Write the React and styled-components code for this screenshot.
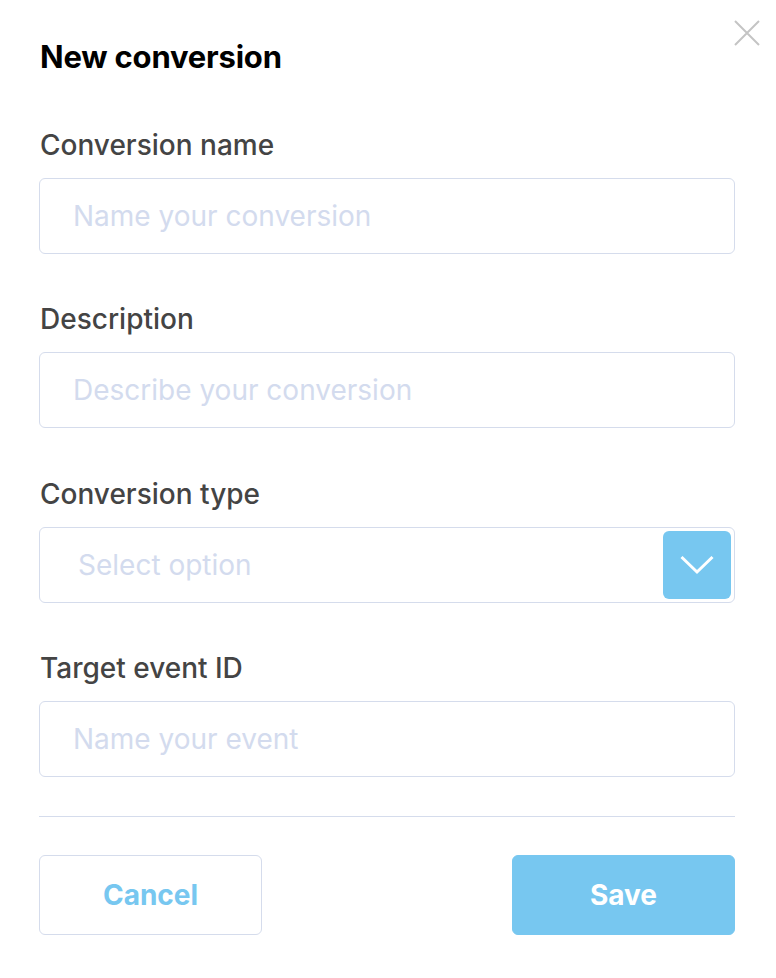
import React from "react";
import styled, { createGlobalStyle } from "styled-components";

const GlobalStyle = createGlobalStyle`
  body {
    margin: 0;
    background: #ffffff;
    font-family: Inter, "Noto Sans", sans-serif;
  }
`;

const Modal = styled.div`
  position: relative;
  width: 696px;
  padding: 39px 41px 40px 39px;
  background: #ffffff;
`;

const CloseButton = styled.button`
  position: absolute;
  top: 20px;
  right: 16px;
  width: 26px;
  height: 26px;
  padding: 0;
  border: none;
  background: transparent;
  cursor: pointer;
`;

const Title = styled.h1`
  margin: 0 0 54px 1px;
  font-size: 31px;
  line-height: 36px;
  font-weight: 700;
  letter-spacing: -0.2px;
  color: #000000;
`;

const Field = styled.div`
  display: flex;
  flex-direction: column;
  gap: 17px;
  margin-bottom: 49.4px;
`;

const Label = styled.label`
  margin-left: 1px;
  font-size: 28px;
  line-height: 32px;
  font-weight: 500;
  color: #444444;
`;

const Input = styled.input`
  box-sizing: border-box;
  width: 100%;
  height: 76px;
  padding: 0 33px;
  border: 1px solid #d5dcec;
  border-radius: 6px;
  font-family: inherit;
  font-size: 28px;
  color: #333333;
  outline: none;
  &::placeholder {
    color: #d3dbee;
  }
`;

const SelectBox = styled.div`
  box-sizing: border-box;
  display: flex;
  align-items: center;
  justify-content: space-between;
  height: 76px;
  padding: 3px 3px 3px 38px;
  border: 1px solid #d5dcec;
  border-radius: 6px;
  cursor: pointer;
`;

const SelectText = styled.span`
  font-size: 28px;
  color: #d3dbee;
`;

const ChevronBox = styled.div`
  display: flex;
  align-items: center;
  justify-content: center;
  width: 68px;
  height: 68px;
  border-radius: 6px;
  background: #77c7f0;
`;

const Divider = styled.hr`
  margin: -11px 0 38px;
  border: none;
  border-top: 1px solid #d5dcec;
`;

const Actions = styled.div`
  display: flex;
  justify-content: space-between;
`;

const Button = styled.button`
  box-sizing: border-box;
  width: 223px;
  height: 80px;
  border-radius: 6px;
  border: 1px solid ${({ $primary }) => ($primary ? "#77c7f0" : "#d5dcec")};
  background: ${({ $primary }) => ($primary ? "#77c7f0" : "#ffffff")};
  color: ${({ $primary }) => ($primary ? "#ffffff" : "#77c7f0")};
  font-family: inherit;
  font-size: 28px;
  font-weight: 700;
  cursor: pointer;
`;

const fields = [
  { label: "Conversion name", placeholder: "Name your conversion" },
  { label: "Description", placeholder: "Describe your conversion" },
  { label: "Conversion type", select: true, placeholder: "Select option" },
  { label: "Target event ID", placeholder: "Name your event" },
];

const App = () => {
  return (
    <>
      <GlobalStyle />
      <Modal>
        <CloseButton aria-label="Close">
          <svg width="26" height="26" viewBox="0 0 26 26">
            <path
              d="M1 1 L25 25 M25 1 L1 25"
              stroke="#c4c4c4"
              strokeWidth="2"
              fill="none"
            />
          </svg>
        </CloseButton>
        <Title>New conversion</Title>
        {fields.map((f) => (
          <Field key={f.label}>
            <Label>{f.label}</Label>
            {f.select ? (
              <SelectBox>
                <SelectText>{f.placeholder}</SelectText>
                <ChevronBox>
                  <svg width="34" height="20" viewBox="0 0 34 20">
                    <path
                      d="M1.5 2 L17 17 L32.5 2"
                      stroke="#ffffff"
                      strokeWidth="3"
                      fill="none"
                    />
                  </svg>
                </ChevronBox>
              </SelectBox>
            ) : (
              <Input placeholder={f.placeholder} />
            )}
          </Field>
        ))}
        <Divider />
        <Actions>
          <Button>Cancel</Button>
          <Button $primary>Save</Button>
        </Actions>
      </Modal>
    </>
  );
};

export default App;
